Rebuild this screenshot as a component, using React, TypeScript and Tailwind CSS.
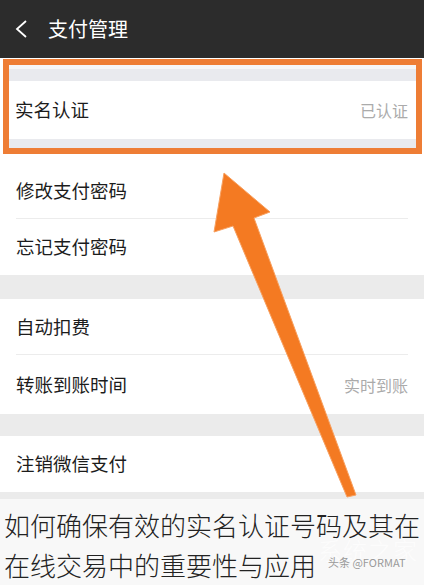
import React from "react";

const font = { fontFamily: '"Noto Sans CJK SC", "Noto Sans", sans-serif' };

function Row({ label, value, sep }: { label: string; value?: string; sep?: boolean }) {
  return (
    <div className="relative flex h-[56px] items-center justify-between bg-white pl-[16px] pr-[16px]">
      <span className="text-[18.5px] text-[#1c1c1c]">{label}</span>
      {value && <span className="text-[16px] text-[#ababab]">{value}</span>}
      {sep && <div className="absolute bottom-0 left-[16px] right-[16px] h-px bg-[#ececec]" />}
    </div>
  );
}

export default function App() {
  return (
    <div className="relative w-[424px] h-[588px] overflow-hidden bg-white" style={font}>
      <div className="flex h-[58px] items-center bg-[#2c2c2c] pl-[14px]">
        <svg width="16" height="20" viewBox="0 0 16 20" className="mr-[18px]">
          <path d="M12 2 L3 10 L12 18" fill="none" stroke="#ffffff" strokeWidth="1.8" />
        </svg>
        <span className="text-[20px] text-white">支付管理</span>
      </div>

      <div className="ml-[3px] mr-[2px] mt-px border-[6px] border-[#ee7d35]">
        <div className="h-[4px] bg-[#f6f6f8]" />
        <div className="h-[12px] bg-[#e9eaee]" />
        <div className="flex h-[58px] items-center justify-between bg-white pl-[6px] pr-[8px]">
          <span className="text-[18.5px] text-[#1c1c1c]">实名认证</span>
          <span className="text-[16px] text-[#ababab]">已认证</span>
        </div>
        <div className="h-[9px] bg-[#e9eaee]" />
      </div>
      <div className="h-[9px] bg-white" />

      <Row label="修改支付密码" sep />
      <Row label="忘记支付密码" />
      <div className="h-[24px] bg-[#ebebeb]" />
      <Row label="自动扣费" sep />
      <div className="relative flex h-[59px] items-center justify-between bg-white pl-[16px] pr-[16px]">
        <span className="text-[18.5px] text-[#1c1c1c]">转账到账时间</span>
        <span className="text-[16px] text-[#ababab]">实时到账</span>
      </div>
      <div className="h-[22px] bg-[#ebebeb]" />
      <Row label="注销微信支付" />
      <div className="h-[7px] bg-[#ebebeb]" />

      <div className="relative bg-[#f8f8f8] pl-[4px] pt-[6px] text-[26px] font-light leading-[40px] text-[#222222]">
        <div className="whitespace-nowrap">如何确保有效的实名认证号码及其在</div>
        <div className="whitespace-nowrap">在线交易中的重要性与应用</div>
        <span className="absolute left-[318px] top-[36px] text-[24px] leading-[30px] tracking-[1px] text-[#ffffff] opacity-70">系统之家</span>
        <span className="absolute left-[328px] top-[56px] text-[11px] font-normal leading-[14px] text-[#9a9a9a]">头条 @FORMAT</span>
      </div>

      <svg className="absolute left-0 top-0" width="424" height="588" viewBox="0 0 424 588">
        <polygon
          points="224,173 270,212 254,218 356,495 347,497 233,226 214,232"
          fill="#f47a22"
          stroke="#f7a060"
          strokeWidth="1"
          strokeLinejoin="round"
        />
      </svg>
    </div>
  );
}
